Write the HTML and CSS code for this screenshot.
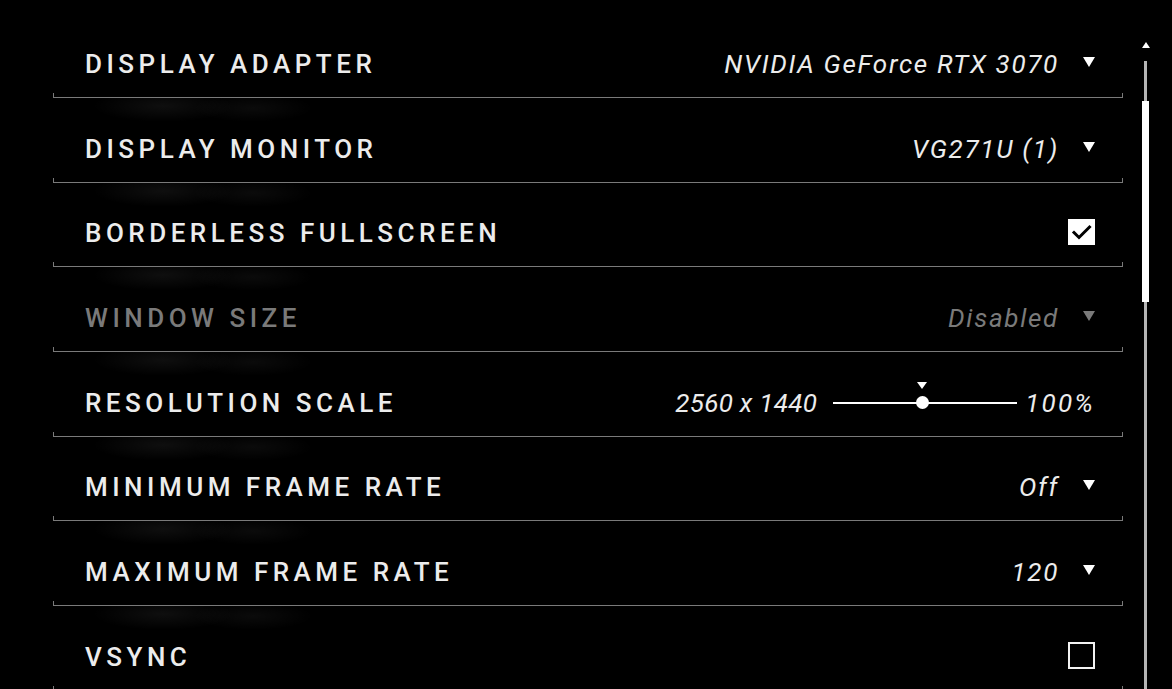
FILE: index.html
```html
<!DOCTYPE html>
<html>
<head>
<meta charset="utf-8">
<link rel="stylesheet" href="styles.css">
</head>
<body>
<div class="page">
  <div class="list">
    <div class="row">
      <div class="row-body">
        <span class="label">DISPLAY ADAPTER</span>
        <span class="control"><span class="value">NVIDIA GeForce RTX 3070</span><svg class="arrow" viewBox="0 0 12 10"><polygon points="0,0 12,0 6,10"/></svg></span>
      </div>
      <div class="rule"></div>
    </div>
    <div class="row">
      <div class="row-body">
        <span class="label">DISPLAY MONITOR</span>
        <span class="control"><span class="value">VG271U (1)</span><svg class="arrow" viewBox="0 0 12 10"><polygon points="0,0 12,0 6,10"/></svg></span>
      </div>
      <div class="rule"></div>
    </div>
    <div class="row">
      <div class="row-body">
        <span class="label">BORDERLESS FULLSCREEN</span>
        <span class="control"><span class="check on"><svg viewBox="0 0 27 26"><polyline points="6,13.5 11,18.5 21.5,8" /></svg></span></span>
      </div>
      <div class="rule"></div>
    </div>
    <div class="row disabled">
      <div class="row-body">
        <span class="label">WINDOW SIZE</span>
        <span class="control"><span class="value">Disabled</span><svg class="arrow" viewBox="0 0 12 10"><polygon points="0,0 12,0 6,10"/></svg></span>
      </div>
      <div class="rule"></div>
    </div>
    <div class="row">
      <div class="row-body">
        <span class="label">RESOLUTION SCALE</span>
        <span class="control slider-ctl">
          <span class="value res">2560 x 1440</span>
          <span class="slider">
            <span class="knob-mark"></span>
            <span class="knob"></span>
          </span>
          <span class="value pct">100%</span>
        </span>
      </div>
      <div class="rule"></div>
    </div>
    <div class="row">
      <div class="row-body">
        <span class="label">MINIMUM FRAME RATE</span>
        <span class="control"><span class="value">Off</span><svg class="arrow" viewBox="0 0 12 10"><polygon points="0,0 12,0 6,10"/></svg></span>
      </div>
      <div class="rule"></div>
    </div>
    <div class="row">
      <div class="row-body">
        <span class="label">MAXIMUM FRAME RATE</span>
        <span class="control"><span class="value">120</span><svg class="arrow" viewBox="0 0 12 10"><polygon points="0,0 12,0 6,10"/></svg></span>
      </div>
      <div class="rule"></div>
    </div>
    <div class="row">
      <div class="row-body">
        <span class="label">VSYNC</span>
        <span class="control"><span class="check off"></span></span>
      </div>
      <div class="rule"></div>
    </div>
  </div>
  <div class="scrollbar">
    <svg class="scroll-up" viewBox="0 0 8 6"><polygon points="4,0 8,6 0,6"/></svg>
    <div class="track"><div class="thumb"></div></div>
  </div>
</div>
</body>
</html>
```

FILE: styles.css
```css
* { box-sizing: border-box; }
html, body {
  margin: 0;
  padding: 0;
  background: #000;
  height: 100%;
  overflow: hidden;
}
body {
  font-family: Roboto, "Liberation Sans", sans-serif;
  color: #ececec;
}
.page {
  display: flex;
  height: 689px;
}
.list {
  margin-left: 53px;
  width: 1070px;
  padding-top: 13.33px;
  display: flex;
  flex-direction: column;
}
.row {
  display: flex;
  flex-direction: column;
}
.row-body {
  height: 79.67px;
  padding: 19.67px 28px 0 32px;
  display: flex;
  align-items: stretch;
  justify-content: space-between;
}
.row + .row .row-body {
  background:
    radial-gradient(ellipse 70px 16px at 110px 8px, rgba(255,255,255,0.06), rgba(255,255,255,0) 100%),
    radial-gradient(ellipse 60px 14px at 200px 10px, rgba(255,255,255,0.045), rgba(255,255,255,0) 100%);
}
.label, .control {
  height: 60px;
  display: flex;
  align-items: center;
}
.label {
  font-size: 26px;
  font-weight: 500;
  letter-spacing: 4.5px;
  padding-top: 2px;
}
.value {
  font-size: 26px;
  font-style: italic;
  font-weight: 400;
  letter-spacing: 1.7px;
  padding-top: 2px;
}
.arrow {
  width: 12px;
  height: 10px;
  margin-left: 24px;
  margin-top: -2px;
  fill: #fff;
}
.rule {
  height: 5px;
  border: 1px solid #7a7a7a;
  border-top: none;
}
.disabled .label, .disabled .value { color: #7a7a7a; }
.disabled .arrow { fill: #7a7a7a; }

.check {
  width: 27px;
  height: 26px;
  display: block;
}
.check.on { background: #fff; }
.check.on svg { width: 27px; height: 26px; display: block; }
.check.on polyline {
  fill: none;
  stroke: #000;
  stroke-width: 3;
  stroke-linecap: square;
}
.check.off {
  height: 27px;
  border: 2px solid #f2f2f2;
}

.value.res { letter-spacing: 0.3px; }
.value.pct { letter-spacing: 2.2px; }
.slider {
  position: relative;
  width: 184px;
  height: 2px;
  background: #fff;
  margin: 2px 8px 0 16px;
}
.knob {
  position: absolute;
  left: 82.5px;
  top: -6px;
  width: 13px;
  height: 13px;
  border-radius: 50%;
  background: #fff;
}
.knob-mark {
  position: absolute;
  left: 84px;
  top: -20px;
  width: 0;
  height: 0;
  border-left: 5px solid transparent;
  border-right: 5px solid transparent;
  border-top: 7px solid #fff;
}

.scrollbar {
  margin-left: 19px;
  width: 7px;
  padding-top: 42px;
  display: flex;
  flex-direction: column;
  align-items: center;
}
.scroll-up {
  width: 8px;
  height: 6px;
  fill: #fff;
  display: block;
}
.track {
  margin-top: 13px;
  flex: 1;
  width: 7px;
  background: linear-gradient(to right, transparent 2px, #b5b5b5 2px, #b5b5b5 5px, transparent 5px);
}
.thumb {
  margin-top: 40px;
  height: 201px;
  width: 7px;
  background: #fff;
}
```
